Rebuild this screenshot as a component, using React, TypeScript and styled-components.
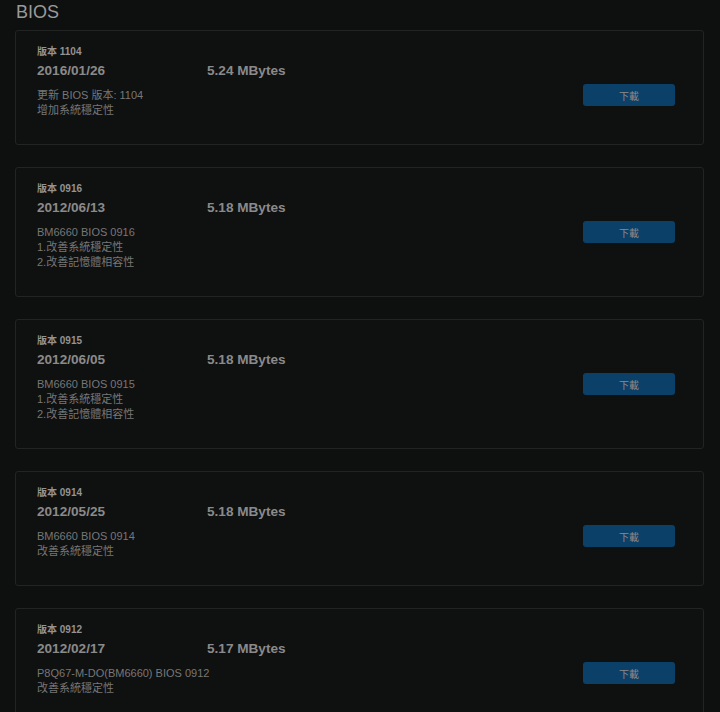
import React from 'react';
import styled, { createGlobalStyle } from 'styled-components';

const releases = [
  { version: '1104', date: '2016/01/26', size: '5.24 MBytes', notes: ['更新 BIOS 版本: 1104', '增加系統穩定性'] },
  { version: '0916', date: '2012/06/13', size: '5.18 MBytes', notes: ['BM6660 BIOS 0916', '1.改善系統穩定性', '2.改善記憶體相容性'] },
  { version: '0915', date: '2012/06/05', size: '5.18 MBytes', notes: ['BM6660 BIOS 0915', '1.改善系統穩定性', '2.改善記憶體相容性'] },
  { version: '0914', date: '2012/05/25', size: '5.18 MBytes', notes: ['BM6660 BIOS 0914', '改善系統穩定性'] },
  { version: '0912', date: '2012/02/17', size: '5.17 MBytes', notes: ['P8Q67-M-DO(BM6660) BIOS 0912', '改善系統穩定性'] },
];

const App = () => {
  return (
    <>
      <GlobalStyle />
      <Page>
        <Title>BIOS</Title>
        <List>
          {releases.map((r) => (
            <Card key={r.version}>
              <Info>
                <Version>版本 {r.version}</Version>
                <Meta>
                  <Date>{r.date}</Date>
                  <Size>{r.size}</Size>
                </Meta>
                <Notes>
                  {r.notes.map((n) => (
                    <div key={n}>{n}</div>
                  ))}
                </Notes>
              </Info>
              <DownloadButton>下載</DownloadButton>
            </Card>
          ))}
        </List>
      </Page>
    </>
  );
};

export default App;

const GlobalStyle = createGlobalStyle`
  body {
    margin: 0;
    background: #0e0f0f;
    font-family: "Liberation Sans", "Noto Sans CJK TC", sans-serif;
  }
`;

const Page = styled.div`
  padding: 0 17px 0 15px;
  height: 712px;
  overflow: hidden;
`;

const Title = styled.h1`
  margin: 0;
  padding: 1px 0 0 1px;
  height: 29px;
  font-size: 18px;
  font-weight: 400;
  line-height: 22px;
  color: #9a9a9a;
`;

const List = styled.div`
  display: flex;
  flex-direction: column;
  gap: 22px;
`;

const Card = styled.div`
  display: flex;
  align-items: flex-start;
  width: 689px;
  box-sizing: border-box;
  padding: 15px 28px 27px 21px;
  border: 1px solid #222323;
  border-radius: 3px;
  background: #0f1010;
`;

const Info = styled.div`
  flex: 1;
`;

const Version = styled.div`
  font-size: 10px;
  font-weight: 700;
  line-height: 12px;
  color: #939393;
`;

const Meta = styled.div`
  display: flex;
  margin-top: 4px;
  font-size: 13.6px;
  font-weight: 700;
  line-height: 18px;
  color: #8a8a8a;
`;

const Date = styled.div`
  width: 170px;
`;

const Size = styled.div``;

const Notes = styled.div`
  margin-top: 8px;
  margin-bottom: -1px;
  font-size: 11px;
  line-height: 15px;
  color: #777;
`;

const DownloadButton = styled.button`
  margin-top: 38px;
  width: 92px;
  height: 22px;
  border: none;
  border-radius: 3px;
  background: #0b4169;
  color: #8a8a8a;
  font-family: inherit;
  font-size: 10px;
  cursor: pointer;
`;
